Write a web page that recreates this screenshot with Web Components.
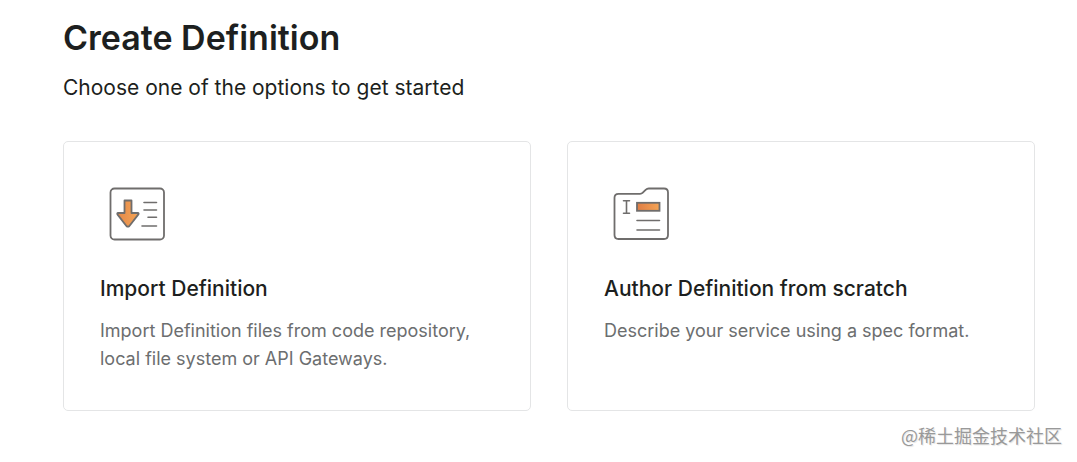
<!DOCTYPE html>
<html lang="en">
<head>
<meta charset="utf-8">
<meta name="viewport" content="width=device-width, initial-scale=1">
<title>Create Definition</title>
<style>
  body { margin: 0; background: #fff; color: #1d1f20; font-family: Inter, "Liberation Sans", sans-serif; }
</style>
</head>
<body>
<definition-page>
  <page-header>
    <span slot="title">Create Definition</span>
    <span slot="subtitle">Choose one of the options to get started</span>
  </page-header>
  <option-card href="#import">
    <import-icon slot="icon"></import-icon>
    <span slot="title">Import Definition</span>
    Import Definition files from code repository, local file system or API Gateways.
  </option-card>
  <option-card href="#author">
    <author-icon slot="icon"></author-icon>
    <span slot="title">Author Definition from scratch</span>
    Describe your service using a spec format.
  </option-card>
</definition-page>
<credit-line lang="zh-CN">@稀土掘金技术社区</credit-line>

<script>
  const define = (name, html) => {
    const template = document.createElement('template');
    template.innerHTML = html;
    customElements.define(name, class extends HTMLElement {
      constructor() {
        super();
        this.attachShadow({ mode: 'open' }).append(template.content.cloneNode(true));
      }
      connectedCallback() {
        const link = this.shadowRoot.querySelector('a');
        if (link) link.href = this.getAttribute('href');
      }
    });
  };

  define('definition-page', `
    <style>
      :host { display: block; padding: 16px 42px 10px 63px; }
      main { display: grid; grid-template-columns: 1fr 1fr; column-gap: 36px; }
      ::slotted(page-header) { grid-column: 1 / -1; margin-bottom: 39px; }
    </style>
    <main><slot></slot></main>`);

  define('page-header', `
    <style>
      :host { display: block; }
      h1 { margin: 0 0 14px; font-size: 34px; line-height: 44px; font-weight: 600; }
      p { margin: 0; font-size: 21px; line-height: 28px; }
    </style>
    <h1><slot name="title"></slot></h1>
    <p><slot name="subtitle"></slot></p>`);

  define('option-card', `
    <style>
      :host { display: flex; }
      a { flex: 1; box-sizing: border-box; padding: 37px 36px; border: 1px solid #e4e5e6; border-radius: 5px; color: inherit; text-decoration: none; }
      h2 { margin: 24px 0 14px; font-size: 21px; line-height: 28px; font-weight: 500; }
      p { margin: 0; font-size: 18px; line-height: 28px; color: #6c6e6f; }
    </style>
    <a>
      <slot name="icon"></slot>
      <h2><slot name="title"></slot></h2>
      <p><slot></slot></p>
    </a>`);

  const iconStyle = `
    <style>
      :host { display: block; }
      svg { display: block; width: 72px; height: 72px; fill: none; stroke: #6f6d6c; stroke-width: 1.8; stroke-linejoin: round; stroke-linecap: round; }
    </style>`;

  define('import-icon', iconStyle + `
    <svg viewBox="0 0 72 72" aria-hidden="true">
      <defs><linearGradient id="g"><stop stop-color="#e3894a"/><stop offset="1" stop-color="#f5a455"/></linearGradient></defs>
      <rect x="10.5" y="9.5" width="53.5" height="51" rx="4"/>
      <path fill="url(#g)" d="M24.5 21.5h7V34h6.2q1.6.2.5 1.6L29.2 47.2q-1.3 1-2.6 0L17.6 35.6q-1-1.4.6-1.6h6.3z"/>
      <path stroke-width="1.6" d="M44 23.5h12.5M44 31h12.5M48 38.2h8.5M42 47h14.5"/>
    </svg>`);

  define('author-icon', iconStyle + `
    <svg viewBox="0 0 72 72" aria-hidden="true">
      <defs><linearGradient id="g"><stop stop-color="#df7e46"/><stop offset="1" stop-color="#f5a455"/></linearGradient></defs>
      <path d="M14.5 14.8H36q1.7 0 2.8-1.2l2.8-2.8Q43 9.5 44.8 9.5H60q4 0 4 4V56q0 4-4 4H14.5q-4 0-4-4V18.8q0-4 4-4z"/>
      <path stroke-width="1.6" d="M19.5 21.8h6M22.5 21.8v12.4M19.5 34.2h6M33 41.5h22.5M33 51h22.5"/>
      <rect x="33" y="23.8" width="22.5" height="8" fill="url(#g)" stroke-linejoin="miter"/>
    </svg>`);

  define('credit-line', `
    <style>
      :host { display: block; padding: 0 15px; text-align: right; font-family: "Noto Sans CJK SC", sans-serif; font-size: 18px; line-height: 28px; color: #999; text-shadow: 1px 1px 1px #e4e4e4; }
    </style>
    <slot></slot>`);
</script>
</body>
</html>
